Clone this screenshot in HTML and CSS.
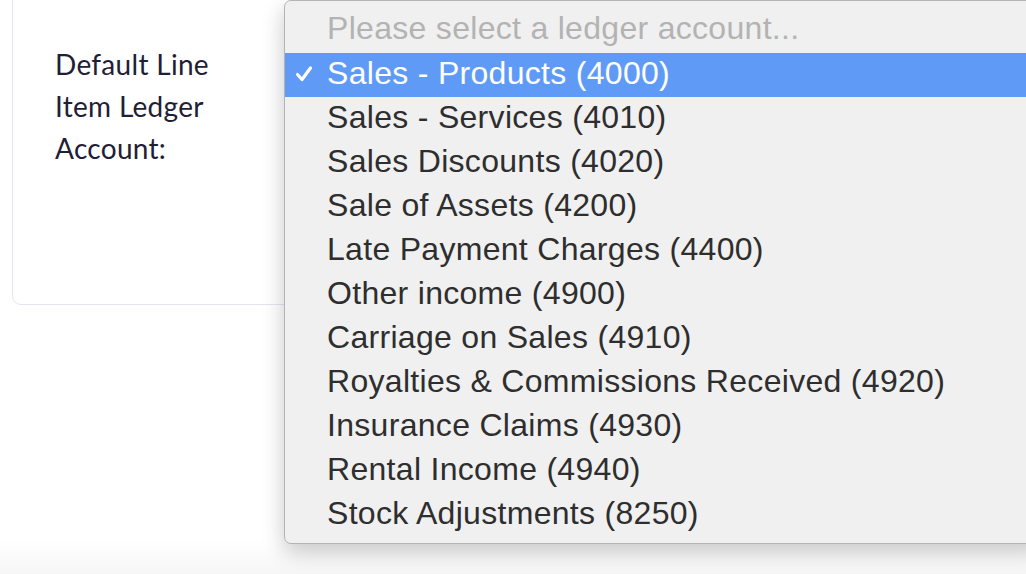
FILE: index.html
```html
<!DOCTYPE html>
<html lang="en">
  <head>
    <meta charset="UTF-8" />
    <meta name="viewport" content="width=device-width, initial-scale=1.0" />
    <title>Ledger Settings</title>
    <link rel="stylesheet" href="styles.css">
  </head>
  <body>
    <div class="page">
      <div class="card">
        <div class="field">
          <label class="field-label">Default Line<br>Item Ledger<br>Account:</label>
        </div>
      </div>

      <ul class="dropdown">
        <li class="option placeholder">Please select a ledger account...</li>
        <li class="option selected">
          <svg class="check" width="18" height="18" viewBox="0 0 18 18">
            <path d="M2.5 9.5 L7 14.5 L15.5 3" fill="none" stroke="#fff" stroke-width="3.2" stroke-linecap="round" stroke-linejoin="round" />
          </svg>
          Sales - Products (4000)
        </li>
        <li class="option">Sales - Services (4010)</li>
        <li class="option">Sales Discounts (4020)</li>
        <li class="option">Sale of Assets (4200)</li>
        <li class="option">Late Payment Charges (4400)</li>
        <li class="option">Other income (4900)</li>
        <li class="option">Carriage on Sales (4910)</li>
        <li class="option">Royalties &amp; Commissions Received (4920)</li>
        <li class="option">Insurance Claims (4930)</li>
        <li class="option">Rental Income (4940)</li>
        <li class="option">Stock Adjustments (8250)</li>
      </ul>
    </div>
  </body>
</html>
```

FILE: styles.css
```css
html, body {
  margin: 0;
  height: 100%;
  overflow: hidden;
}
body {
  background: linear-gradient(to bottom, #fff 0, #fff 540px, #f6f6f6 574px);
  font-family: Lato, "Noto Sans", sans-serif;
}
.page {
  position: relative;
  display: flow-root;
  padding: 0 0 0 12px;
}
.card {
  margin-top: -20px;
  height: 325px;
  box-sizing: border-box;
  border: 1px solid #e3e6f0;
  border-radius: 9px;
  background: #fff;
  padding: 62px 42px 0;
}
.field-label {
  display: block;
  font-size: 28px;
  line-height: 42px;
  letter-spacing: 0.3px;
  color: #1f2035;
}
.dropdown {
  position: absolute;
  top: 0;
  left: 284px;
  width: 760px;
  height: 544px;
  box-sizing: border-box;
  margin: 0;
  padding: 8px 0;
  list-style: none;
  background: #f0f0f0;
  border: 1px solid #b4b4b4;
  border-radius: 7px;
  box-shadow: 0 8px 22px rgba(0, 0, 0, 0.22);
  font-family: "Liberation Sans", Arial, sans-serif;
  font-size: 32px;
  letter-spacing: 0.3px;
  color: #2e2e2e;
}
.option {
  position: relative;
  height: 44px;
  box-sizing: border-box;
  line-height: 40px;
  padding-left: 42px;
  white-space: nowrap;
}
.placeholder {
  color: #b3b3b3;
  line-height: 38px;
}
.selected {
  background: #5f9bf6;
  color: #fff;
}
.check {
  position: absolute;
  left: 10px;
  top: 12px;
}
```
